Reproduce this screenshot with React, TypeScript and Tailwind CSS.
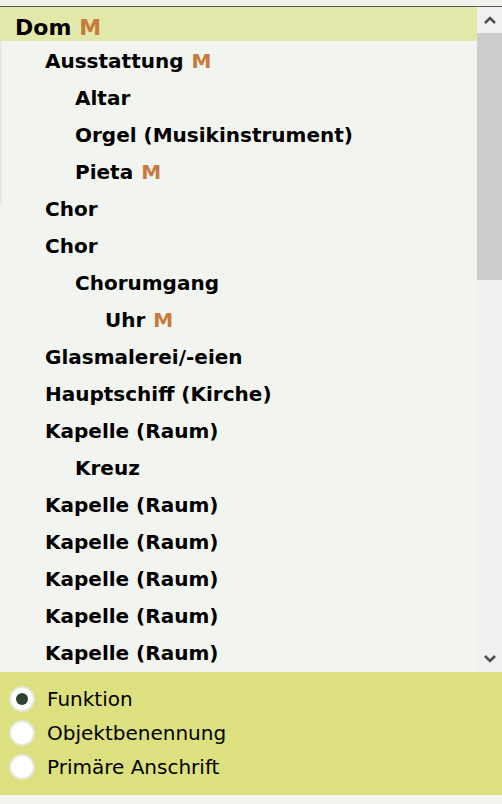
import React from "react";

type Node = { label: string; level: number; marked?: boolean };

const nodes: Node[] = [
  { label: "Ausstattung", level: 1, marked: true },
  { label: "Altar", level: 2 },
  { label: "Orgel (Musikinstrument)", level: 2 },
  { label: "Pieta", level: 2, marked: true },
  { label: "Chor", level: 1 },
  { label: "Chor", level: 1 },
  { label: "Chorumgang", level: 2 },
  { label: "Uhr", level: 3, marked: true },
  { label: "Glasmalerei/-eien", level: 1 },
  { label: "Hauptschiff (Kirche)", level: 1 },
  { label: "Kapelle (Raum)", level: 1 },
  { label: "Kreuz", level: 2 },
  { label: "Kapelle (Raum)", level: 1 },
  { label: "Kapelle (Raum)", level: 1 },
  { label: "Kapelle (Raum)", level: 1 },
  { label: "Kapelle (Raum)", level: 1 },
  { label: "Kapelle (Raum)", level: 1 },
];

const indent: Record<number, string> = {
  1: "pl-[45px]",
  2: "pl-[75px]",
  3: "pl-[105px]",
};

const options = ["Funktion", "Objektbenennung", "Primäre Anschrift"];

const Chevron = ({ up }: { up?: boolean }) => (
  <svg width="14" height="10" viewBox="0 0 14 10">
    <polyline
      points={up ? "2,8 7,3 12,8" : "2,2 7,7 12,2"}
      fill="none"
      stroke="#505050"
      strokeWidth="2.6"
    />
  </svg>
);

const App = () => {
  return (
    <div className="w-[502px] h-[804px] flex flex-col bg-[#f2f4ef] font-['DejaVu_Sans',sans-serif] text-black overflow-hidden">
      <div className="h-[6px] shrink-0 bg-[#f0f2ed]" />
      <div className="h-[1px] shrink-0 bg-[#5a5d55]" />

      <div className="flex h-[665px] shrink-0">
        <div className="flex-1 overflow-hidden relative">
          <div className="h-[34px] bg-[#e2e8aa] flex items-center pl-[15px] pt-[6px] text-[22px] font-bold">
            Dom <span className="ml-[8px] text-[#c77a3b]">M</span>
          </div>
          <div className="absolute left-0 top-[34px] w-[2px] h-[164px] bg-[#e6e8e2]" />
          {nodes.map((n, i) => (
            <div
              key={i}
              className={`h-[37px] flex items-center pt-[3px] text-[20px] font-bold ${indent[n.level]}`}
            >
              {n.label}
              {n.marked && <span className="ml-[8px] text-[#c77a3b]">M</span>}
            </div>
          ))}
        </div>
        <div className="w-[25px] shrink-0 flex flex-col bg-[#f0f0f0]">
          <div className="h-[26px] flex items-center justify-center">
            <Chevron up />
          </div>
          <div className="h-[247px] bg-[#cdcdcd]" />
          <div className="flex-1" />
          <div className="h-[26px] flex items-center justify-center">
            <Chevron />
          </div>
        </div>
      </div>

      <div className="h-[123px] shrink-0 bg-[#dce07f] flex flex-col pt-[10px] pl-[9px]">
        {options.map((o, i) => (
          <label key={o} className="h-[34px] flex items-center gap-[12px] text-[20px]">
            <span className="w-[26px] h-[26px] rounded-full bg-white border-2 border-[#e4e6d2] flex items-center justify-center">
              {i === 0 && <span className="w-[12px] h-[12px] rounded-full bg-[#2c4431]" />}
            </span>
            {o}
          </label>
        ))}
      </div>
      <div className="flex-1 bg-[#f2f4ef]" />
    </div>
  );
};

export default App;
